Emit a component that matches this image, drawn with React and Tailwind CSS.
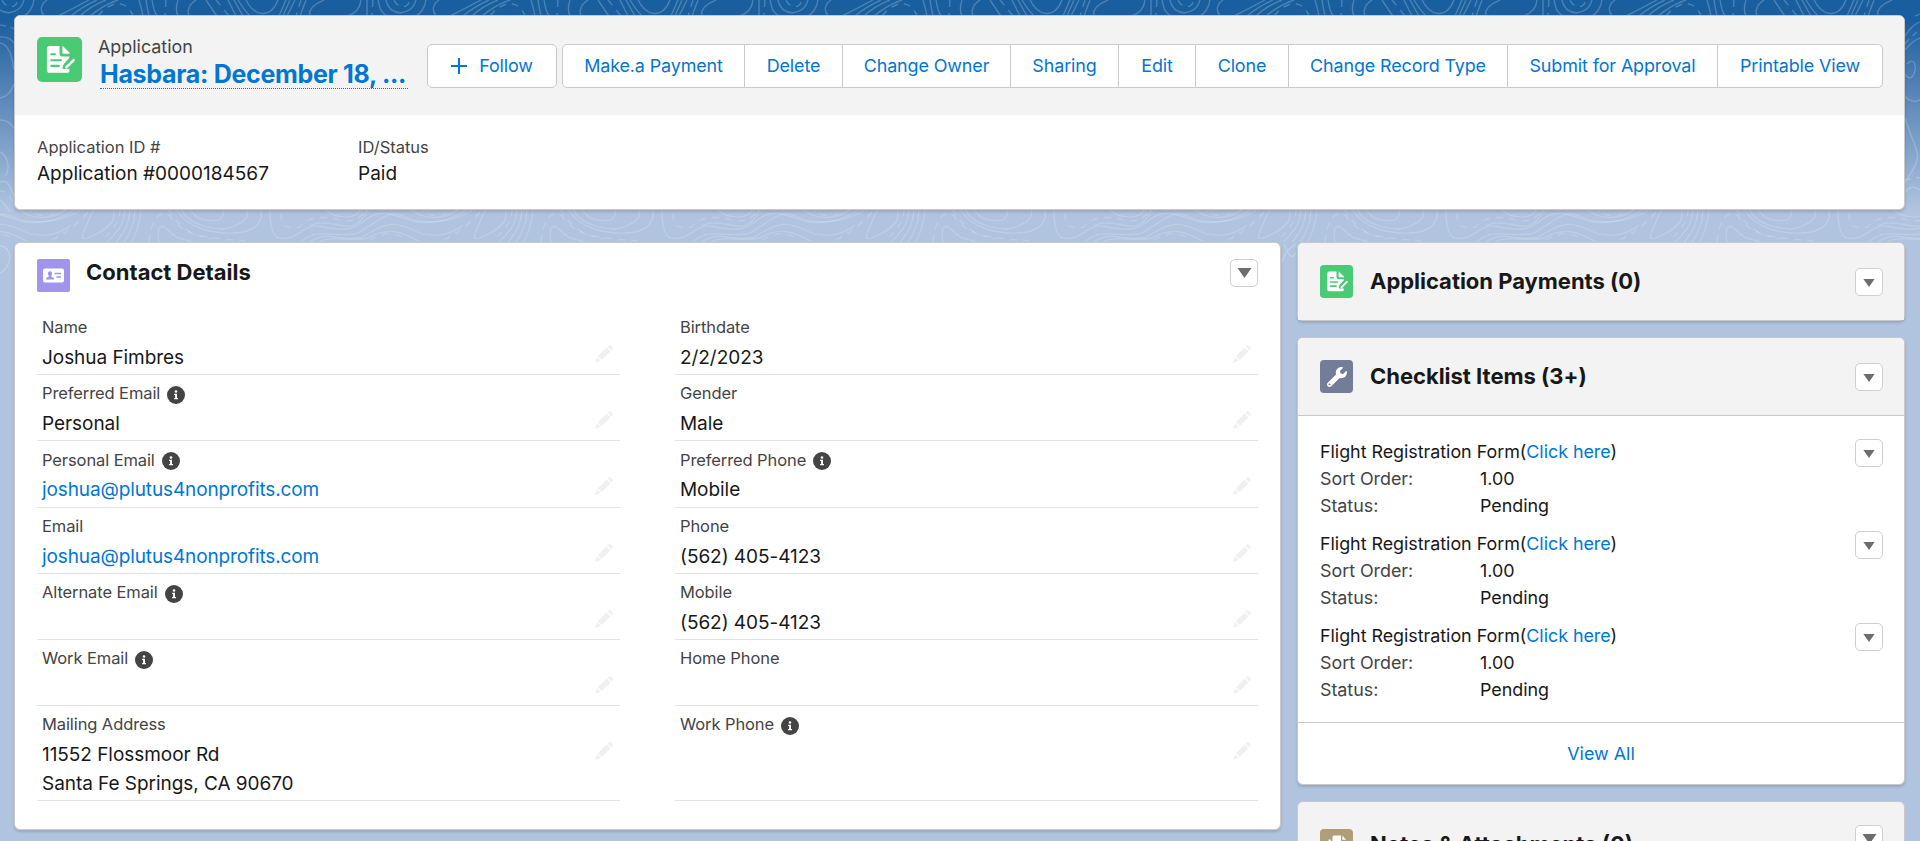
import React from "react";
import { FaWrench } from "react-icons/fa";

const actions = [
    { label: "Make.a Payment", width: "w-[182px]" },
    { label: "Delete", width: "w-[98px]" },
    { label: "Change Owner", width: "w-[168px]" },
    { label: "Sharing", width: "w-[108px]" },
    { label: "Edit", width: "w-[77px]" },
    { label: "Clone", width: "w-[93px]" },
    { label: "Change Record Type", width: "w-[219px]" },
    { label: "Submit for Approval", width: "w-[210px]" },
    { label: "Printable View", width: "w-[164px]" },
];

const leftFields = [
    { label: "Name", value: "Joshua Fimbres" },
    { label: "Preferred Email", value: "Personal", info: true },
    { label: "Personal Email", value: "joshua@plutus4nonprofits.com", info: true, link: true },
    { label: "Email", value: "joshua@plutus4nonprofits.com", link: true },
    { label: "Alternate Email", info: true },
    { label: "Work Email", info: true },
];

const rightFields = [
    { label: "Birthdate", value: "2/2/2023" },
    { label: "Gender", value: "Male" },
    { label: "Preferred Phone", value: "Mobile", info: true },
    { label: "Phone", value: "(562) 405-4123" },
    { label: "Mobile", value: "(562) 405-4123" },
    { label: "Home Phone" },
];

const checklist = [1, 2, 3];

/* Contour lines behind the cards, repeated every 392px */
const topLines = [
    "M-2 0C6 16 22 20 30 0",
    "M-10 0C-4 10 0 14 2 16",
    "M38 0L31 16",
    "M42 0L35 16",
    "M47 0L39 16",
    "M58 0L52 16",
    "M76 0C64 5 60 10 62 16",
    "M113 0C112 10 106 14 99 16",
    "M119 0L119 16",
    "M130 0C132 10 134 14 140 16",
    "M138 0C142 18 164 16 168 0",
    "M178 0C177 8 172 14 168 16",
    "M191 0C184 5 184 11 188 16",
    "M233 0C222 6 210 12 202 16",
    "M241 0C232 4 222 10 215 16",
    "M250 0C240 4 230 10 224 16",
    "M262 0C250 4 240 11 234 16",
    "M283 0C285 6 286 12 287 16",
    "M290 0C291 6 292 12 293 16",
    "M296 0C297 6 298 12 301 16",
    "M322 0C320 6 320 12 322 16",
    "M340 0C332 5 331 12 333 16",
    "M350 0C354 6 358 12 361 16",
    "M372 0L380 16",
    "M378 0L387 16",
];

const topDashes = [
    "M53 0L48 16",
    "M125 0L124 16",
    "M146 0C150 9 160 9 162 0",
    "M242 16C254 1 270 -2 277 16",
    "M310 0L309 16",
    "M360 0L373 16",
];

const lowLines = [
    "M333 209C340 218 347 222 356 220C364 223 370 215 366 209",
    "M325 209C332 224 350 228 368 229",
    "M391 209C394 218 386 225 368 229",
    "M320 209C330 226 352 234 378 233C398 232 407 224 405 209",
    "M22 209C22 226 24 234 30 238C48 242 56 224 70 226C100 232 106 230 120 218C134 208 148 216 164 221C184 225 204 220 220 209",
    "M78 209C84 219 110 220 112 209",
    "M120 209C114 222 108 227 98 226C82 224 72 220 62 226",
    "M53 242C70 226 88 239 110 233C130 222 138 209 156 216C172 225 204 224 226 209",
    "M62 242C80 229 95 243 115 237C138 221 148 222 165 230C178 237 200 238 215 225",
    "M72 242C80 235 105 242 120 238C140 226 155 232 172 242",
    "M163 209C174 220 198 220 211 209",
    "M238 209C232 220 226 236 226 238C232 240 250 230 256 222C260 214 257 209 257 209",
    "M269 209C268 224 262 232 251 242",
    "M274 209C273 225 268 233 260 242",
    "M279 209C279 224 274 234 268 242",
    "M285 209C284 224 280 234 276 242",
    "M303 242C300 225 306 224 312 230C320 240 330 239 336 242",
];

const lowDashes = [
    "M33 213C33 228 40 229 52 227C62 215 75 217 88 219C106 224 112 218 118 210",
    "M180 214C188 217 196 216 202 212",
    "M122 240C135 231 150 232 158 240",
    "M196 240C210 232 220 226 234 210",
    "M264 209C264 222 256 232 245 240",
    "M293 242C296 215 306 210 314 216C326 236 350 238 392 241",
    "M312 209C324 228 336 236 356 239",
];

function Contours() {
    return (
        <svg className="absolute inset-0" width="1920" height="841" fill="none" stroke="#fff" strokeWidth="1.4">
            {[-536, -144, 248, 640, 1032, 1424, 1816].map((x) => (
                <g key={x} transform={`translate(${x} 0)`}>
                    <g strokeOpacity="0.22">
                        {topLines.map((d) => <path key={d} d={d} />)}
                    </g>
                    <g strokeOpacity="0.22" strokeDasharray="7 6">
                        {topDashes.map((d) => <path key={d} d={d} />)}
                    </g>
                    <g strokeOpacity="0.17">
                        {lowLines.map((d) => <path key={d} d={d} />)}
                    </g>
                    <g strokeOpacity="0.17" strokeDasharray="7 6">
                        {lowDashes.map((d) => <path key={d} d={d} />)}
                    </g>
                </g>
            ))}
            {/* Page gutters */}
            <g strokeOpacity="0.2">
                <path d="M0 37C8 36 12 40 15 44M0 43C8 44 12 54 14 70M0 98C8 97 12 90 14 84M0 120C8 120 12 124 15 130M0 152C8 156 10 168 6 176M0 182C8 178 12 190 15 200M0 200C6 206 8 208 10 212" />
                <path d="M1905 36C1910 28 1914 24 1920 22M1905 50C1910 44 1914 40 1920 38M1907 64C1914 56 1918 66 1913 76C1910 80 1906 76 1905 74M1905 96C1910 102 1916 102 1920 100M1905 118C1910 136 1920 152 1917 160C1914 172 1906 178 1905 184M1905 192C1910 186 1916 186 1920 190" />
                <path d="M0 246C8 246 12 256 8 264C6 270 2 272 0 273M1284 244C1288 254 1292 262 1296 252M1282 262C1286 250 1290 248 1296 244" />
            </g>
            <g strokeOpacity="0.2" strokeDasharray="6 5">
                <path d="M0 25C6 26 10 27 15 29M0 191C6 190 10 196 14 204M1905 44C1910 38 1914 34 1920 30M1905 180C1910 180 1914 176 1920 178" />
            </g>
        </svg>
    );
}

function ApplicationIcon({ className }) {
    return (
        <svg viewBox="0 0 44 44" className={className}>
            <rect width="44" height="44" rx="5" fill="#4bca76" />
            <path
                fill="#fff"
                d="M12 8.7H22V16.2Q22 19 24.8 19H31.6V20.6L26.6 25.8Q25 27.6 25 31.2Q28 31.6 29.6 31L31.8 31.6V32.5Q31.8 35 29.3 35H12.2Q9.7 35 9.7 32.5V11.2Q9.7 8.7 12 8.7Z"
            />
            <path fill="#fff" d="M24.8 9.2Q24.8 8.3 25.5 9L31.8 15.4Q32.4 16.3 31.4 16.3H25.8Q24.8 16.3 24.8 15.3Z" />
            <path stroke="#fff" strokeWidth="2.4" strokeLinecap="round" d="M35.8 22.6L28.6 29.8" />
            <path stroke="#4bca76" strokeWidth="2.1" strokeLinecap="round" d="M14 16.9H17.6M14 22.7H23.4M14 28.2H21.4" />
        </svg>
    );
}

function ContactIcon() {
    return (
        <svg viewBox="0 0 33 33" className="size-[33px] shrink-0">
            <rect width="33" height="33" rx="2" fill="#a094ed" />
            <rect x="6" y="9.5" width="21" height="14" rx="2" fill="#fff" />
            <path fill="#a094ed" d="M13 12.2a2.1 2.3 0 0 1 2.1 2.3c0 1.2-.6 2-.9 2.4v.6l2.3 1.2q.6.4.6 1v.9H9v-.9q0-.6.6-1l2.3-1.2v-.6c-.4-.4-1-1.2-1-2.4a2.1 2.3 0 0 1 2.1-2.3Z" />
            <path stroke="#a094ed" strokeWidth="1.6" strokeLinecap="round" d="M18.2 14.5H23.4M20 18H23.4" />
        </svg>
    );
}

function NotesIcon() {
    return (
        <svg viewBox="0 0 33 33" className="size-[33px] shrink-0">
            <rect width="33" height="33" rx="4" fill="#b09e78" />
            <path fill="#fff" d="M14 6.5H21V11Q21 12.5 22.5 12.5H26V21Q26 22.5 24.5 22.5H14Q12.5 22.5 12.5 21V8Q12.5 6.5 14 6.5Z" />
            <path fill="#fff" d="M22.4 6.5L26 10.8H22.4Z" />
            <path fill="#fff" d="M8.5 10.5H10.7V23Q10.7 24.5 12.2 24.5H22V25Q22 26.5 20.5 26.5H10Q8.5 26.5 8.5 25Z" />
        </svg>
    );
}

function InfoIcon() {
    return (
        <svg viewBox="0 0 18 18" className="size-[18px] mt-[3px]">
            <circle cx="9" cy="9" r="9" fill="#444" />
            <circle cx="9" cy="5.5" r="1.3" fill="#fff" />
            <path fill="#fff" d="M7.1 7.7H10V12H11V13.2H7.1V12H8.1V8.9H7.1Z" />
        </svg>
    );
}

function PencilIcon() {
    return (
        <svg viewBox="0 0 18 18" className="size-[18px] shrink-0" fill="#f0f0f0">
            <path d="M2.9 11.3L11.6 2.6L15.4 6.4L6.7 15.1Z" />
            <path d="M12.6 1.6L13.8.5Q14.8-.3 15.8.6L17.4 2.2Q18.3 3.200 17.5 4.2L16.4 5.4Z" />
            <path d="M2.2 12.2L5.8 15.8L.9 17.8Q0 18 .2 17.1Z" />
        </svg>
    );
}

function MenuButton({ large }) {
    return (
        <button className="flex items-center justify-center size-7 shrink-0 rounded-[5px] border border-[#cfcfcf] bg-white">
            <svg viewBox="0 0 14 10" className={large ? "w-[15px] h-[10px]" : "w-[12px] h-[8px] mt-0.5"}>
                <path d="M0 0H14L7 10Z" fill="#6f6d6b" />
            </svg>
        </button>
    );
}

function Field({ label, value, info, link, tall, children }) {
    return (
        <div className={`flex justify-between border-b border-[#e2e2e2] pl-[5px] pr-[7px] ${tall ? "h-[95px]" : "h-[66.2px]"}`}>
            <div>
                <div className="flex items-center gap-[7px] h-[37px] text-[16.5px] text-[#444] tracking-[-0.1px]">
                    {label}
                    {info && <InfoIcon />}
                </div>
                <div className={`-mt-0.5 text-[19px] leading-[28.5px] ${link ? "text-[#0176d3] tracking-[-0.12px]" : "text-[#181818] tracking-[-0.05px]"}`}>
                    {value}
                    {children}
                </div>
            </div>
            <div className="pt-[36px]">
                <PencilIcon />
            </div>
        </div>
    );
}

function SideHeader({ icon, title }) {
    return (
        <div className="flex items-center h-[77px] pl-[22px] pr-[21px] bg-[#f3f3f3] rounded-t-[5px]">
            {icon}
            <h2 className="ml-[17px] flex-1 text-[22px] font-bold text-[#181818] tracking-[-0.02px]">{title}</h2>
            <MenuButton />
        </div>
    );
}

export default function App() {
    return (
        <div className="relative w-[1920px] h-[841px] overflow-hidden font-['Inter',sans-serif] bg-[#b0c4df]">
            <div className="absolute inset-x-0 top-0 h-[210px] bg-linear-to-b from-[#195f9f] from-10% to-[#b0c4df]"></div>
            <Contours />

            <div className="relative pl-[14px] pr-[15px] pt-[15px]">
                {/* Record header */}
                <div className="h-[195px] rounded-[6px] border border-[#c9c9c9] bg-white shadow-[0_2px_3px_rgba(0,0,0,0.15)]">
                    <div className="flex h-[98.5px] pl-[22px] pr-[21px] rounded-t-[5px] bg-[#f3f3f3]">
                        <ApplicationIcon className="size-[45px] mt-[21px] shrink-0" />
                        <div className="ml-[16px] pt-[19px] w-[329px] shrink-0">
                            <p className="h-6 leading-6 text-[17.9px] text-[#444]">Application</p>
                            <p className="ml-[2px] w-[308px] h-[30px] leading-[30px] text-[25px] font-bold text-[#0176d3] whitespace-nowrap border-b border-dotted border-[#0176d3] tracking-[-0.3px]">
                                Hasbara: December 18, ...
                            </p>
                        </div>
                        <div className="flex pt-[28px] text-[17.9px] text-[#0176d3] tracking-[-0.1px]">
                            <button className="flex items-center justify-center gap-3 w-[130px] h-[44px] rounded-[5px] border border-[#c9c9c9] bg-white">
                                <svg viewBox="0 0 16 16" className="size-4">
                                    <path d="M8 0.5V15.5M0.5 8H15.5" stroke="#0176d3" strokeWidth="2" strokeLinecap="round" />
                                </svg>
                                Follow
                            </button>
                            <div className="flex ml-[5px] h-[44px] rounded-[5px] border border-[#c9c9c9] bg-white divide-x divide-[#c9c9c9]">
                                {actions.map((a) => (
                                    <button key={a.label} className={`${a.width} shrink-0 whitespace-nowrap`}>
                                        {a.label}
                                    </button>
                                ))}
                            </div>
                        </div>
                    </div>
                    <div className="flex pl-[22px] pt-[20px]">
                        <div className="w-[321px]">
                            <p className="h-6 leading-6 text-[16.5px] text-[#444]">Application ID #</p>
                            <p className="h-7 leading-[29px] text-[19px] text-[#181818]">Application #0000184567</p>
                        </div>
                        <div>
                            <p className="h-6 leading-6 text-[16.5px] text-[#444]">ID/Status</p>
                            <p className="h-7 leading-[29px] text-[19px] text-[#181818]">Paid</p>
                        </div>
                    </div>
                </div>

                <div className="flex items-start gap-4 mt-8">
                    {/* Contact details */}
                    <div className="w-[1267px] h-[588px] rounded-[6px] border border-[#c9c9c9] bg-white shadow-[0_2px_3px_rgba(0,0,0,0.15)] px-[22px]">
                        <div className="flex h-[66px] pt-[16px]">
                            <ContactIcon />
                            <h2 className="ml-[16px] flex-1 h-[26px] leading-[26px] text-[22px] font-bold text-[#181818]">Contact Details</h2>
                            <MenuButton large />
                        </div>
                        <div className="flex justify-between">
                            <div className="w-[583px]">
                                {leftFields.map((f) => <Field key={f.label} {...f} />)}
                                <Field label="Mailing Address" tall>
                                    <p>11552 Flossmoor Rd</p>
                                    <p>Santa Fe Springs, CA 90670</p>
                                </Field>
                            </div>
                            <div className="w-[583px]">
                                {rightFields.map((f) => <Field key={f.label} {...f} />)}
                                <Field label="Work Phone" info tall />
                            </div>
                        </div>
                    </div>

                    {/* Related lists */}
                    <div className="flex flex-col gap-4 w-[608px]">
                        <div className="rounded-[6px] border border-[#c9c9c9] bg-[#f3f3f3] shadow-[0_2px_3px_rgba(0,0,0,0.15)]">
                            <SideHeader icon={<ApplicationIcon className="size-[33px] shrink-0" />} title="Application Payments (0)" />
                        </div>

                        <div className="rounded-[6px] border border-[#c9c9c9] bg-white shadow-[0_2px_3px_rgba(0,0,0,0.15)]">
                            <SideHeader
                                icon={
                                    <div className="flex items-center justify-center size-[33px] rounded-[4px] bg-[#747d98] text-white">
                                        <FaWrench size={20} />
                                    </div>
                                }
                                title="Checklist Items (3+)"
                            />
                            <div className="h-[308px] border-y border-[#c9c9c9] pl-[22px] pr-[21px] pt-[22px]">
                                {checklist.map((n) => (
                                    <div key={n} className="flex justify-between h-[91.8px] text-[17.9px] leading-[27px] tracking-[-0.03px]">
                                        <div>
                                            <p className="text-[#181818]">
                                                Flight Registration Form(<a className="text-[#0176d3]">Click here</a>)
                                            </p>
                                            <div className="flex">
                                                <span className="w-[160px] text-[#444]">Sort Order:</span>
                                                <span className="text-[#181818]">1.00</span>
                                            </div>
                                            <div className="flex">
                                                <span className="w-[160px] text-[#444]">Status:</span>
                                                <span className="text-[#181818]">Pending</span>
                                            </div>
                                        </div>
                                        <div className="pt-px">
                                            <MenuButton />
                                        </div>
                                    </div>
                                ))}
                            </div>
                            <div className="flex items-center justify-center h-[61px] pt-px text-[17.9px] text-[#0176d3]">View All</div>
                        </div>

                        {/* Only the top of this card is in view */}
                        <div className="flex h-[80px] pl-[22px] pr-[21px] rounded-[6px] border border-[#c9c9c9] bg-[#f3f3f3]">
                            <div className="pt-[27px]">
                                <NotesIcon />
                            </div>
                            <h2 className="ml-[17px] mt-[27px] flex-1 leading-[30px] text-[22px] font-bold text-[#181818]">Notes & Attachments (0)</h2>
                            <div className="pt-[23px]">
                                <MenuButton large />
                            </div>
                        </div>
                    </div>
                </div>
            </div>
        </div>
    );
}
